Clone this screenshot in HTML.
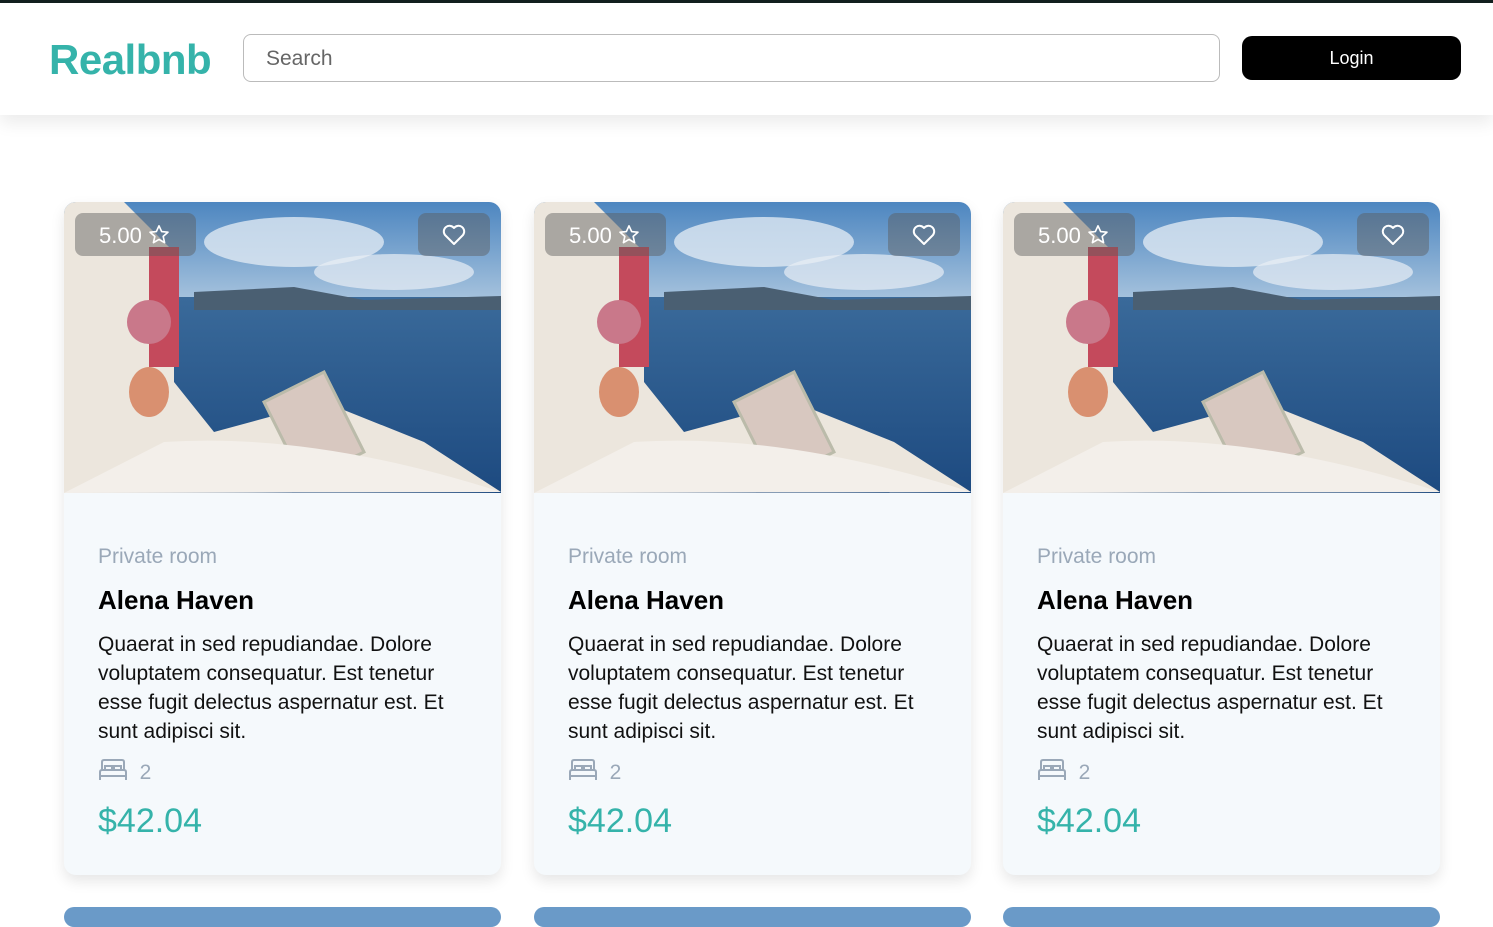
<!DOCTYPE html>
<html><head><meta charset="utf-8"><style>
*{box-sizing:border-box;margin:0;padding:0}
body{width:1493px;height:911px;overflow:hidden;background:#fff;font-family:"Liberation Sans",sans-serif;position:relative}
.top{position:absolute;left:0;top:0;width:1493px;height:3px;background:#13201f}
.hdr{position:absolute;left:0;top:3px;width:1493px;height:112px;background:#fff;box-shadow:0 8px 16px rgba(0,0,0,.08)}
.logo{position:absolute;left:49px;top:33px;font-size:42px;font-weight:bold;color:#35b3aa;letter-spacing:-0.5px}
.search{position:absolute;left:243px;top:31px;width:977px;height:48px;border:1px solid #bbb;border-radius:8px;font-size:21px;color:#666;padding:12px 22px}
.login{position:absolute;left:1242px;top:33px;width:219px;height:44px;background:#000;border-radius:10px;color:#fff;font-size:18px;text-align:center;line-height:44px}
.card{position:absolute;top:202px;width:437px;height:673px;background:#f5f9fc;border-radius:12px;box-shadow:0 6px 14px rgba(0,0,0,.1);overflow:hidden}
.img{position:absolute;left:0;top:0;width:437px;height:291px}
.rate{position:absolute;left:11px;top:11px;width:121px;height:43px;background:rgba(90,90,90,.45);border-radius:8px;color:#fff;font-size:22px;padding:10px 0 0 24px}
.rate svg{position:absolute;left:73px;top:11px}
.heart{position:absolute;left:354px;top:11px;width:72px;height:43px;background:rgba(90,90,90,.45);border-radius:8px}
.type{position:absolute;left:34px;top:343px;font-size:21px;color:#9aa8b8}
.name{position:absolute;left:34px;top:383px;font-size:26px;font-weight:bold;color:#000}
.desc{position:absolute;left:34px;top:428px;width:370px;font-size:21px;line-height:29px;color:#111}
.bed{position:absolute;left:34px;top:556px;font-size:21px;color:#9aa8b8}
.price{position:absolute;left:34px;top:600px;font-size:34px;color:#35b3aa}
.nxt{position:absolute;top:907px;width:437px;height:20px;border-radius:12px;background:#6a9ac8}
</style></head><body>
<div class="top"></div>
<div class="hdr">
<div class="logo">Realbnb</div>
<div class="search">Search</div>
<div class="login">Login</div>
</div>

<svg width="0" height="0" style="position:absolute"><defs>
<linearGradient id="sky" x1="0" y1="0" x2="0" y2="1"><stop offset="0" stop-color="#4d86c0"/><stop offset="1" stop-color="#a8c4de"/></linearGradient>
<linearGradient id="sea" x1="0" y1="0" x2="0" y2="1"><stop offset="0" stop-color="#3a6a9a"/><stop offset="1" stop-color="#1d4a80"/></linearGradient>
</defs></svg>

<div class="card" style="left:64px">
<svg class="img" viewBox="0 0 437 291" preserveAspectRatio="none">
<rect width="437" height="100" fill="url(#sky)"/>
<ellipse cx="230" cy="40" rx="90" ry="25" fill="#dfe9f3" opacity=".8"/><ellipse cx="330" cy="70" rx="80" ry="18" fill="#e8eef5" opacity=".7"/>
<rect y="95" width="437" height="196" fill="url(#sea)"/>
<path d="M130 90 L230 85 L300 98 L437 94 L437 108 L130 108Z" fill="#4a5f72"/>
<path d="M0 0 L60 0 L110 50 L110 180 L150 230 L260 200 L360 240 L437 290 L0 291Z" fill="#ece6dd"/>
<rect x="85" y="45" width="30" height="120" fill="#c44a5c"/>
<circle cx="85" cy="120" r="22" fill="#c9788a"/>
<ellipse cx="85" cy="190" rx="20" ry="25" fill="#d99070"/>
<path d="M200 200 L260 170 L300 250 L240 280Z" fill="#d8c8c0" stroke="#bba" stroke-width="3"/>
<path d="M100 240 Q250 230 437 290 L0 291Z" fill="#f3efea"/>
</svg>
<div class="rate">5.00 <svg width="22" height="21" viewBox="0 0 24 23"><path d="M12 2 L14.9 8.3 L21.8 9 L16.6 13.6 L18.1 20.4 L12 16.9 L5.9 20.4 L7.4 13.6 L2.2 9 L9.1 8.3Z" fill="none" stroke="#fff" stroke-width="1.8" stroke-linejoin="round"/></svg></div>
<div class="heart"><svg width="72" height="43" viewBox="0 0 72 43"><path d="M36 31 L27 22 A5 5 0 0 1 36 15 A5 5 0 0 1 45 22Z" fill="none" stroke="#fff" stroke-width="2" stroke-linejoin="round"/></svg></div>
<div class="type">Private room</div>
<div class="name">Alena Haven</div>
<div class="desc">Quaerat in sed repudiandae. Dolore voluptatem consequatur. Est tenetur esse fugit delectus aspernatur est. Et sunt adipisci sit.</div>
<div class="bed"><svg width="30" height="24" viewBox="0 0 30 24" style="vertical-align:-3px"><path d="M4 12 V4 Q4 2 6 2 H24 Q26 2 26 4 V12 M2 22 V14 Q2 12 4 12 H26 Q28 12 28 14 V22 M2 18 H28 M7 12 V8 H14 V12 M16 12 V8 H23 V12" fill="none" stroke="#9aa8b8" stroke-width="2"/></svg> &nbsp;2</div>
<div class="price">$42.04</div>
</div>

<div class="card" style="left:534px">
<svg class="img" viewBox="0 0 437 291" preserveAspectRatio="none">
<rect width="437" height="100" fill="url(#sky)"/>
<ellipse cx="230" cy="40" rx="90" ry="25" fill="#dfe9f3" opacity=".8"/><ellipse cx="330" cy="70" rx="80" ry="18" fill="#e8eef5" opacity=".7"/>
<rect y="95" width="437" height="196" fill="url(#sea)"/>
<path d="M130 90 L230 85 L300 98 L437 94 L437 108 L130 108Z" fill="#4a5f72"/>
<path d="M0 0 L60 0 L110 50 L110 180 L150 230 L260 200 L360 240 L437 290 L0 291Z" fill="#ece6dd"/>
<rect x="85" y="45" width="30" height="120" fill="#c44a5c"/>
<circle cx="85" cy="120" r="22" fill="#c9788a"/>
<ellipse cx="85" cy="190" rx="20" ry="25" fill="#d99070"/>
<path d="M200 200 L260 170 L300 250 L240 280Z" fill="#d8c8c0" stroke="#bba" stroke-width="3"/>
<path d="M100 240 Q250 230 437 290 L0 291Z" fill="#f3efea"/>
</svg>
<div class="rate">5.00 <svg width="22" height="21" viewBox="0 0 24 23"><path d="M12 2 L14.9 8.3 L21.8 9 L16.6 13.6 L18.1 20.4 L12 16.9 L5.9 20.4 L7.4 13.6 L2.2 9 L9.1 8.3Z" fill="none" stroke="#fff" stroke-width="1.8" stroke-linejoin="round"/></svg></div>
<div class="heart"><svg width="72" height="43" viewBox="0 0 72 43"><path d="M36 31 L27 22 A5 5 0 0 1 36 15 A5 5 0 0 1 45 22Z" fill="none" stroke="#fff" stroke-width="2" stroke-linejoin="round"/></svg></div>
<div class="type">Private room</div>
<div class="name">Alena Haven</div>
<div class="desc">Quaerat in sed repudiandae. Dolore voluptatem consequatur. Est tenetur esse fugit delectus aspernatur est. Et sunt adipisci sit.</div>
<div class="bed"><svg width="30" height="24" viewBox="0 0 30 24" style="vertical-align:-3px"><path d="M4 12 V4 Q4 2 6 2 H24 Q26 2 26 4 V12 M2 22 V14 Q2 12 4 12 H26 Q28 12 28 14 V22 M2 18 H28 M7 12 V8 H14 V12 M16 12 V8 H23 V12" fill="none" stroke="#9aa8b8" stroke-width="2"/></svg> &nbsp;2</div>
<div class="price">$42.04</div>
</div>

<div class="card" style="left:1003px">
<svg class="img" viewBox="0 0 437 291" preserveAspectRatio="none">
<rect width="437" height="100" fill="url(#sky)"/>
<ellipse cx="230" cy="40" rx="90" ry="25" fill="#dfe9f3" opacity=".8"/><ellipse cx="330" cy="70" rx="80" ry="18" fill="#e8eef5" opacity=".7"/>
<rect y="95" width="437" height="196" fill="url(#sea)"/>
<path d="M130 90 L230 85 L300 98 L437 94 L437 108 L130 108Z" fill="#4a5f72"/>
<path d="M0 0 L60 0 L110 50 L110 180 L150 230 L260 200 L360 240 L437 290 L0 291Z" fill="#ece6dd"/>
<rect x="85" y="45" width="30" height="120" fill="#c44a5c"/>
<circle cx="85" cy="120" r="22" fill="#c9788a"/>
<ellipse cx="85" cy="190" rx="20" ry="25" fill="#d99070"/>
<path d="M200 200 L260 170 L300 250 L240 280Z" fill="#d8c8c0" stroke="#bba" stroke-width="3"/>
<path d="M100 240 Q250 230 437 290 L0 291Z" fill="#f3efea"/>
</svg>
<div class="rate">5.00 <svg width="22" height="21" viewBox="0 0 24 23"><path d="M12 2 L14.9 8.3 L21.8 9 L16.6 13.6 L18.1 20.4 L12 16.9 L5.9 20.4 L7.4 13.6 L2.2 9 L9.1 8.3Z" fill="none" stroke="#fff" stroke-width="1.8" stroke-linejoin="round"/></svg></div>
<div class="heart"><svg width="72" height="43" viewBox="0 0 72 43"><path d="M36 31 L27 22 A5 5 0 0 1 36 15 A5 5 0 0 1 45 22Z" fill="none" stroke="#fff" stroke-width="2" stroke-linejoin="round"/></svg></div>
<div class="type">Private room</div>
<div class="name">Alena Haven</div>
<div class="desc">Quaerat in sed repudiandae. Dolore voluptatem consequatur. Est tenetur esse fugit delectus aspernatur est. Et sunt adipisci sit.</div>
<div class="bed"><svg width="30" height="24" viewBox="0 0 30 24" style="vertical-align:-3px"><path d="M4 12 V4 Q4 2 6 2 H24 Q26 2 26 4 V12 M2 22 V14 Q2 12 4 12 H26 Q28 12 28 14 V22 M2 18 H28 M7 12 V8 H14 V12 M16 12 V8 H23 V12" fill="none" stroke="#9aa8b8" stroke-width="2"/></svg> &nbsp;2</div>
<div class="price">$42.04</div>
</div>

<div class="nxt" style="left:64px"></div>
<div class="nxt" style="left:534px"></div>
<div class="nxt" style="left:1003px"></div>
</body></html>
